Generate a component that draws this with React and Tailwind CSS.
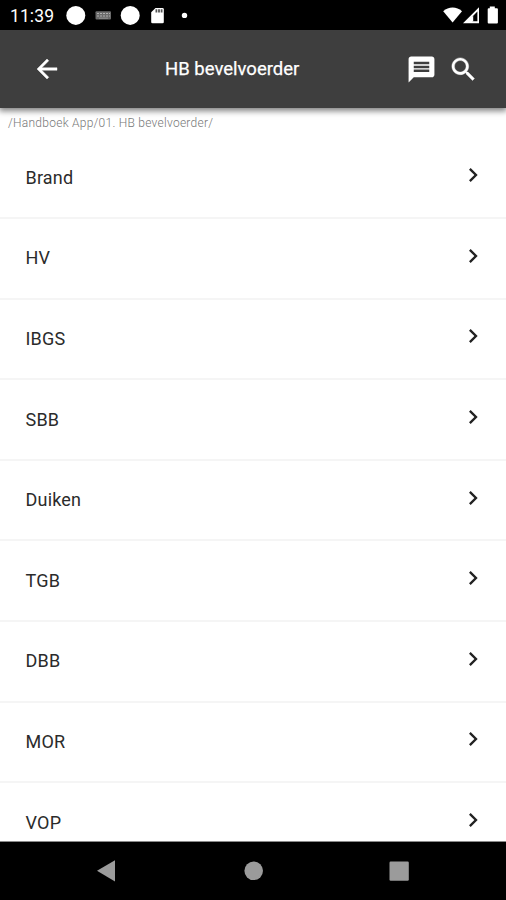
import React from "react";

const items = ["Brand", "HV", "IBGS", "SBB", "Duiken", "TGB", "DBB", "MOR", "VOP"];

function StatusBar() {
  return (
    <div className="h-[30px] shrink-0 bg-black text-white flex items-center">
      <span className="ml-[10px] w-[56px] text-[17.5px] leading-[30px] font-normal tracking-[0.1px] whitespace-nowrap pt-[2px]">
        11:39
      </span>
      <svg width="130" height="30" viewBox="66 0 130 30" fill="#fff">
        <circle cx="75.8" cy="15.4" r="9.5" />
        <rect x="95.5" y="11.2" width="15.5" height="8.3" rx="1" fill="#6b6b6b" />
        <path d="M97 13.5h13M97 16h13" stroke="#b0b0b0" strokeWidth="1" strokeDasharray="2 1" />
        <path d="M99 18.2h9" stroke="#999" strokeWidth="0.8" />
        <circle cx="130.2" cy="15.4" r="9.5" />
        <path d="M155.5 8h7a1.3 1.3 0 0 1 1.3 1.3v12.6a1.3 1.3 0 0 1-1.3 1.3h-10a1.3 1.3 0 0 1-1.3-1.3v-9.7z" />
        <path d="M155.5 9.3h1.8v3.2h-1.8zM158.1 9.3h1.8v3.2h-1.8zM160.7 9.3h1.8v3.2h-1.8z" fill="#555" />
        <circle cx="184.5" cy="15.4" r="2.7" />
      </svg>
      <svg className="ml-auto" width="70" height="30" viewBox="436 0 70 30" fill="#fff">
        <path d="M452.6 22.6 443.2 11.2C448.6 6.2 456.6 6.2 462 11.2z" />
        <path fillRule="evenodd" d="M479 7.2v16h-16zM477.4 11.6l-5.4 5.4v4.3h5.4z" />
        <path d="M471.6 17.2l1.6-1.6v5.8h-1.6z" />
        <path d="M489.8 6.6h5v1.6h2.1a1 1 0 0 1 1 1v13.2a1 1 0 0 1-1 1h-8.2a1 1 0 0 1-1-1V9.2a1 1 0 0 1 1-1h1.1z" />
      </svg>
    </div>
  );
}

function Header() {
  return (
    <header className="relative h-[78px] shrink-0 bg-[#3e3e3e] text-white flex items-center shadow-[0_2px_6px_1px_rgba(0,0,0,0.5)]">
      <svg className="ml-8 size-[30px]" viewBox="0 0 24 24" fill="currentColor" stroke="currentColor" strokeWidth="0.35">
        <path d="M20 11H7.83l5.59-5.59L12 4l-8 8 8 8 1.41-1.41L7.83 13H20v-2z" />
      </svg>
      <h1 className="ml-[103px] w-[241px] text-[18.5px] leading-6 font-normal tracking-[0px] whitespace-nowrap [-webkit-text-stroke:0.25px_white]">
        HB bevelvoerder
      </h1>
      <svg className="size-[31px]" viewBox="0 0 24 24" fill="currentColor">
        <path d="M20 2H4c-1.1 0-2 .9-2 2v18l4-4h14c1.1 0 2-.9 2-2V4c0-1.1-.9-2-2-2zm-2 12H6v-2h12v2zm0-3H6V9h12v2zm0-3H6V6h12v2z" />
      </svg>
      <svg className="ml-[10.5px] size-[31px]" viewBox="0 0 24 24" fill="currentColor" stroke="currentColor" strokeWidth="0.3">
        <path d="M15.5 14h-.79l-.28-.27C15.41 12.59 16 11.11 16 9.5 16 5.91 13.09 3 9.5 3S3 5.91 3 9.5 5.91 16 9.5 16c1.61 0 3.09-.59 4.23-1.57l.27.28v.79l5 4.99L20.49 19l-4.99-5zm-6 0C7.01 14 5 11.99 5 9.5S7.01 5 9.5 5 14 7.01 14 9.5 11.99 14 9.5 14z" />
      </svg>
    </header>
  );
}

function Row({ label }) {
  return (
    <li className="h-[80.6px] shrink-0 flex items-center justify-between border-b-2 border-[#f5f5f5] pl-[25.5px] pr-[19px]">
      <span className="text-[18px] leading-6 tracking-[0.2px] text-[#2b2b2b]">{label}</span>
      <svg className="mb-[5px] size-[28px] text-[#222]" viewBox="0 0 24 24" fill="currentColor">
        <path d="M8.59 16.59 13.17 12 8.59 7.41 10 6l6 6-6 6z" />
      </svg>
    </li>
  );
}

function NavBar() {
  return (
    <nav className="h-[58px] shrink-0 bg-black">
      <svg className="block" width="506" height="58" viewBox="0 842 506 58" fill="#9b9b9b">
        <path d="M97 870.8 115 860.2v21.4z" />
        <circle cx="253.7" cy="870.8" r="9.3" />
        <rect x="389.5" y="861.5" width="19.3" height="19.3" rx="1.2" />
      </svg>
    </nav>
  );
}

export default function App() {
  return (
    <div className="w-[506px] h-[900px] overflow-hidden flex flex-col bg-white font-[Roboto,sans-serif]">
      <StatusBar />
      <Header />
      <main className="h-[734px] shrink-0 overflow-hidden flex flex-col border-b border-[#8a8a8a]">
        <p className="h-[30.5px] shrink-0 pl-2 pt-[7px] text-[12px] leading-4 font-light tracking-[0.26px] text-[#777]">
          /Handboek App/01. HB bevelvoerder/
        </p>
        <ul className="flex flex-col">
          {items.map((label) => (
            <Row key={label} label={label} />
          ))}
        </ul>
      </main>
      <NavBar />
    </div>
  );
}
